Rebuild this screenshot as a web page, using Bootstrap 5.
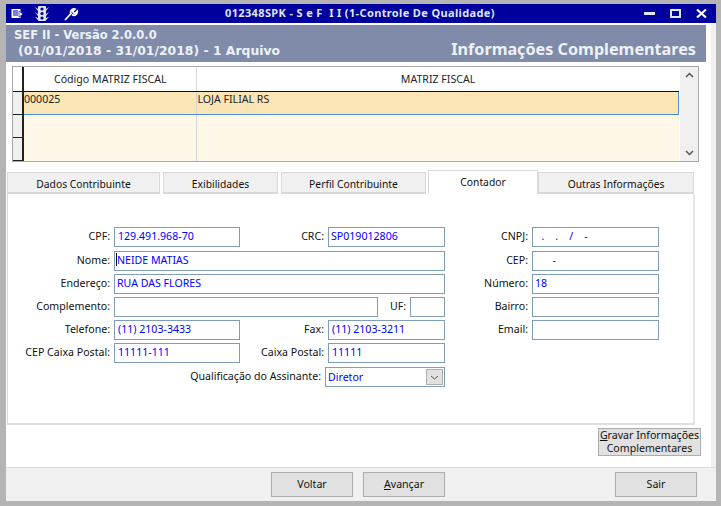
<!DOCTYPE html>
<html lang="pt-BR">
<head>
    <meta charset="UTF-8">
    <meta name="viewport" content="width=device-width, initial-scale=1.0">
    <title>SEF II</title>
    <link href="https://cdn.jsdelivr.net/npm/bootstrap@5.3.0/dist/css/bootstrap.min.css" rel="stylesheet">
    <style>
        html, body { height: 100%; }
        body {
            background: #b4b4b4;
            font-family: "Noto Sans", "Liberation Sans", sans-serif;
            font-size: 10.6px;
            color: #111;
            overflow: hidden;
        }
        .app-window {
            width: 721px;
            height: 506px;
            padding: 4px 5px 5px 6px;
        }
        .app-inner { height: 100%; background: #fff; }
        .title-bar {
            height: 19px;
            background: #00009e;
            color: #dfe6f5;
            font-weight: 700;
            font-size: 11px;
        }
        .title-tools { width: 219px; padding-left: 5px; gap: 11px; flex: none; }
        .title-text { white-space: pre; letter-spacing: .36px; }
        .title-ctrls { gap: 15px; padding-right: 9px; margin-left: auto; }
        .body-wrap { background: #f0f0f0; height: 444px; }
        .body-white { background: #fff; width: 705px; height: 444px; padding-top: 2px; }
        .head-band {
            height: 37px;
            width: 700px;
            background: #7f8ba8;
            color: #eef1f8;
            font-family: "DejaVu Sans", sans-serif;
            font-weight: 700;
            padding: 3px 10px 0 8px;
        }
        .head-line1 { font-size: 11.5px; line-height: 15px; }
        .head-line2 { font-size: 12.4px; line-height: 16px; padding-left: 4px; }
        .head-big {
            font-family: "Noto Sans", sans-serif;
            font-size: 16.2px;
            line-height: 20px;
            margin-top: -4px;
        }
        .grid-box {
            margin: 4px 0 0 6px;
            width: 687px;
            height: 96px;
            border: 1px solid #a9a9a9;
            display: flex;
        }
        .grid-table { width: 667px; table-layout: fixed; margin: 0; border-collapse: collapse; font-size: 10.6px; line-height: 14px; }
        .grid-table td, .grid-table th {
            padding: 0 0 0 1px;
            font-weight: 400;
            border: 0;
            vertical-align: top;
            box-shadow: none;
        }
        .grid-table td.grid-ind, .grid-table th.grid-ind { padding: 0; }
        .grid-ind { background: #f0f0f0; border-right: 2px solid #222 !important; border-bottom: 1px solid #222 !important; }
        .grid-head th { height: 24px; vertical-align: middle; text-align: center; border-bottom: 1px solid #111 !important; }
        .grid-head th + th + th { border-left: 1px solid #d8d8d8 !important; }
        .grid-sel td { height: 23px; background: #fce5b5; border-bottom: 1px solid #4a90d9 !important; }
        .grid-sel td.grid-ind { background: #f0f0f0; border-bottom: 1px solid #222 !important; }
        .grid-sel td.grid-first { padding-left: 0; border-left: 1px solid #4a90d9; }
        .grid-empty td { height: 23px; background: #fff8e8; }
        .grid-empty td.grid-ind { background: #f0f0f0; }
        .grid-sel td + td + td, .grid-empty td + td + td { border-left: 1px solid #d4d4d4 !important; }
        .grid-sel td:last-child { border-right: 1px solid #4a90d9 !important; }
        .col-ind { width: 10px; }
        .col-code { width: 173px; }
        .grid-scroll {
            width: 18px;
            background: #f0f0f0;
            margin-left: 1px;
            padding: 5px 0;
        }
        .tab-strip {
            margin: 8px 0 0 1px;
            width: 688px;
            height: 24px;
            border: 0;
            align-items: flex-end;
            flex-wrap: nowrap;
        }
        .tab-strip .nav-link {
            height: 22px;
            padding: 4px 0 0;
            margin: 0;
            color: #111;
            font-size: 10.3px;
            text-align: center;
            background: #f0f0f0;
            border: 1px solid #d9d9d9;
            border-bottom: 2px solid #d9d9d9;
            border-radius: 0;
        }
        .tab-strip .nav-link.active {
            height: 24px;
            padding-top: 4px;
            background: #fff;
            border-bottom: 0;
            border-color: #d9d9d9;
            color: #111;
        }
        .tab-a { width: 153px; margin-right: 3px !important; }
        .tab-b { width: 115px; margin-right: 3px !important; }
        .tab-c { width: 145px; margin-right: 2px !important; }
        .tab-d { width: 110px; }
        .tab-e { width: 156px; }
        .tab-panel {
            margin-left: 1px;
            width: 688px;
            height: 231px;
            border-left: 1px solid #d9d9d9;
            border-right: 2px solid #e6e6e6;
            border-bottom: 2px solid #e0e0e0;
            padding-top: 33px;
        }
        .fld-left { width: 437px; gap: 3px; }
        .fld-right { width: 214px; gap: 3px; }
        .fld-row { height: 20px; }
        .fld-row-second { margin-top: 1px; }
        .fld-label { text-align: right; padding-right: 4px; white-space: nowrap; flex: none; }
        .lbl-a { width: 106px; }
        .lbl-fill { flex: 1; }
        .fld-input {
            height: 20px;
            min-height: 20px;
            padding: 0 2px 3px 2px;
            border: 1px solid #7f9db9;
            border-radius: 0;
            color: #0000ff;
            font-size: 10.6px;
            line-height: 16px;
            background: #fff;
            flex: none;
        }
        .fld-input:focus { box-shadow: none; border-color: #7f9db9; color: #0000ff; }
        .w-short { width: 126px; }
        .w-crc { width: 117px; }
        .w-long { width: 331px; }
        .w-comp { width: 264px; }
        .w-uf { width: 35px; }
        .w-right { width: 127px; }
        .fld-pad { padding-left: 3px; }
        .fld-caret {
            position: absolute;
            left: 2px;
            top: 2px;
            width: 1px;
            height: 13px;
            background: #111;
        }
        .fld-combo-row { margin-top: 1px; }
        .combo-box {
            width: 120px;
            height: 20px;
            border: 1px solid #7f9db9;
            color: #0000ff;
            padding: 0 1px 0 2px;
            line-height: 18px;
        }
        .combo-btn {
            width: 17px;
            height: 16px;
            margin-top: 1px;
            background: #e1e1e1;
            border: 1px solid #adadad;
        }
        .win-btn {
            background: #e1e1e1;
            border: 1px solid #adadad;
            border-radius: 0;
            color: #111;
            font-size: 10.6px;
            padding: 0;
            line-height: 13px;
        }
        .btn-nav { width: 82px; height: 25px; }
        .btn-save { width: 103px; height: 28px; white-space: nowrap; padding-bottom: 2px; }
        .save-row { padding: 3px 10px 0 0; width: 705px; height: 42px; }
        .foot-bar {
            width: 710px;
            height: 34px;
            background: #f0f0f0;
            border-top: 1px solid #dcdcdc;
            padding: 4px 19px 0 265px;
        }
        .btn-gap { margin-left: 10px; }
    </style>
</head>
<body>
    <div class="app-window">
        <div class="app-inner">
            <div class="title-bar d-flex align-items-center">
                <div class="title-tools d-flex align-items-center">
                    <svg width="13" height="12" viewBox="0 0 13 12"><rect x="0.5" y="1" width="9" height="9" fill="#fff"/><path d="M2 3h5M2 5h5M2 7h5" stroke="#00009e" stroke-width="1"/><path d="M8 3l4 3-4 3z" fill="#fff" stroke="#00009e" stroke-width=".6"/></svg>
                    <svg width="14" height="15" viewBox="0 0 14 15"><rect x="3" y="0" width="8" height="15" rx="1" fill="#dfe6f5"/><path d="M0 1l3 2v2zM14 1l-3 2v2zM0 6l3 2v2zM14 6l-3 2v2zM0 11l3 1v2zM14 11l-3 1v2z" fill="#dfe6f5"/><circle cx="7" cy="3" r="1.6" fill="#00009e"/><circle cx="7" cy="7.5" r="1.6" fill="#00009e"/><circle cx="7" cy="12" r="1.6" fill="#00009e"/></svg>
                    <svg width="14" height="14" viewBox="0 0 14 14" class="ms-1"><path d="M1.500 12.500l5.500-6M7 6.500c-1-2 .5-4.500 3-4.500l.8.2-2 2 .6 1.600 1.700.5 2-2c.3 2.500-2 4.700-4.500 3.600" fill="none" stroke="#fff" stroke-width="1.800" stroke-linecap="round"/></svg>
                </div>
                <div class="title-text">012348SPK - S e F  I I (1-Controle De Qualidade)</div>
                <div class="title-ctrls d-flex align-items-center">
                    <svg width="11" height="11" viewBox="0 0 11 11"><rect x="0" y="4" width="11" height="3" fill="#dfe6f5"/></svg>
                    <svg width="11" height="11" viewBox="0 0 11 11"><rect x="1" y="2" width="9" height="7" fill="none" stroke="#dfe6f5" stroke-width="2"/></svg>
                    <svg width="11" height="11" viewBox="0 0 11 11"><path d="M1 1.500l9 8M10 1.500l-9 8" stroke="#fff" stroke-width="2.200"/></svg>
                </div>
            </div>
            <div class="body-wrap">
                <div class="body-white">
                    <div class="head-band">
                        <div class="head-line1">SEF II - Versão 2.0.0.0</div>
                        <div class="d-flex justify-content-between">
                            <div class="head-line2">(01/01/2018 - 31/01/2018) - 1 Arquivo</div>
                            <div class="head-big">Informações Complementares</div>
                        </div>
                    </div>

                    <div class="grid-box">
                        <table class="table grid-table">
                            <colgroup><col class="col-ind"><col class="col-code"><col></colgroup>
                            <tr class="grid-head"><th class="grid-ind"></th><th>Código MATRIZ FISCAL</th><th>MATRIZ FISCAL</th></tr>
                            <tr class="grid-sel"><td class="grid-ind"></td><td class="grid-first">000025</td><td>LOJA FILIAL RS</td></tr>
                            <tr class="grid-empty"><td class="grid-ind"></td><td></td><td></td></tr>
                            <tr class="grid-empty"><td class="grid-ind"></td><td></td><td></td></tr>
                        </table>
                        <div class="grid-scroll d-flex flex-column justify-content-between align-items-center">
                            <svg width="9" height="6" viewBox="0 0 9 6"><path d="M1 5l3.500-3.500L8 5" fill="none" stroke="#555" stroke-width="1.500"/></svg>
                            <svg width="9" height="6" viewBox="0 0 9 6"><path d="M1 1l3.500 3.500L8 1" fill="none" stroke="#555" stroke-width="1.500"/></svg>
                        </div>
                    </div>

                    <ul class="nav nav-tabs tab-strip">
                        <li class="nav-item"><a class="nav-link tab-a" href="#">Dados Contribuinte</a></li>
                        <li class="nav-item"><a class="nav-link tab-b" href="#">Exibilidades</a></li>
                        <li class="nav-item"><a class="nav-link tab-c" href="#">Perfil Contribuinte</a></li>
                        <li class="nav-item"><a class="nav-link active tab-d" href="#">Contador</a></li>
                        <li class="nav-item"><a class="nav-link tab-e" href="#">Outras Informações</a></li>
                    </ul>

                    <div class="tab-panel d-flex">
                        <div class="fld-left d-flex flex-column">
                            <div class="fld-row d-flex align-items-center">
                                <span class="fld-label lbl-a">CPF:</span><input class="form-control fld-input w-short fld-pad" value="129.491.968-70">
                                <span class="fld-label lbl-fill">CRC:</span><input class="form-control fld-input w-crc" value="SP019012806">
                            </div>
                            <div class="fld-row fld-row-second d-flex align-items-center">
                                <span class="fld-label lbl-a">Nome:</span>
                                <div class="position-relative">
                                    <input class="form-control fld-input w-long" value="NEIDE MATIAS">
                                    <span class="fld-caret"></span>
                                </div>
                            </div>
                            <div class="fld-row d-flex align-items-center">
                                <span class="fld-label lbl-a">Endereço:</span><input class="form-control fld-input w-long" value="RUA DAS FLORES">
                            </div>
                            <div class="fld-row d-flex align-items-center">
                                <span class="fld-label lbl-a">Complemento:</span><input class="form-control fld-input w-comp">
                                <span class="fld-label lbl-fill">UF:</span><input class="form-control fld-input w-uf">
                            </div>
                            <div class="fld-row d-flex align-items-center">
                                <span class="fld-label lbl-a">Telefone:</span><input class="form-control fld-input w-short fld-pad" value="(11) 2103-3433">
                                <span class="fld-label lbl-fill">Fax:</span><input class="form-control fld-input w-crc fld-pad" value="(11) 2103-3211">
                            </div>
                            <div class="fld-row d-flex align-items-center">
                                <span class="fld-label lbl-a">CEP Caixa Postal:</span><input class="form-control fld-input w-short fld-pad" value="11111-111">
                                <span class="fld-label lbl-fill">Caixa Postal:</span><input class="form-control fld-input w-crc fld-pad" value="11111">
                            </div>
                            <div class="fld-row fld-combo-row d-flex align-items-center justify-content-end">
                                <span class="fld-label">Qualificação do Assinante:</span>
                                <div class="combo-box d-flex justify-content-between"><span>Diretor</span>
                                    <span class="combo-btn d-flex align-items-center justify-content-center"><svg width="9" height="5" viewBox="0 0 9 5"><path d="M1 1l3.500 3L8 1" fill="none" stroke="#555" stroke-width="1"/></svg></span>
                                </div>
                            </div>
                        </div>
                        <div class="fld-right d-flex flex-column">
                            <div class="fld-row d-flex align-items-center">
                                <span class="fld-label lbl-fill">CNPJ:</span><input class="form-control fld-input w-right fld-pad" value="  .    .    /    -">
                            </div>
                            <div class="fld-row fld-row-second d-flex align-items-center">
                                <span class="fld-label lbl-fill">CEP:</span><input class="form-control fld-input w-right fld-pad" value="      -">
                            </div>
                            <div class="fld-row d-flex align-items-center">
                                <span class="fld-label lbl-fill">Número:</span><input class="form-control fld-input w-right" value="18">
                            </div>
                            <div class="fld-row d-flex align-items-center">
                                <span class="fld-label lbl-fill">Bairro:</span><input class="form-control fld-input w-right">
                            </div>
                            <div class="fld-row d-flex align-items-center">
                                <span class="fld-label lbl-fill">Email:</span><input class="form-control fld-input w-right">
                            </div>
                        </div>
                    </div>

                    <div class="save-row d-flex justify-content-end align-items-start">
                        <button class="btn win-btn btn-save"><u>G</u>ravar Informações<br>Complementares</button>
                    </div>
                </div>
            </div>
            <div class="foot-bar d-flex">
                <button class="btn win-btn btn-nav">Voltar</button>
                <button class="btn win-btn btn-nav btn-gap"><u>A</u>vançar</button>
                <button class="btn win-btn btn-nav ms-auto">Sair</button>
            </div>
        </div>
    </div>
</body>
</html>
